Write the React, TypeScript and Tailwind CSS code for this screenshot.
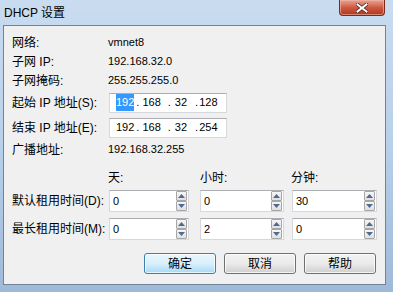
import React from 'react';

const cjk = "font-['Liberation_Sans','Noto_Sans_CJK_SC',sans-serif]";

const InfoRow = ({ label, value }: { label: string; value: string }) => (
  <div className="flex h-[19px] items-center">
    <span className="w-[96px] text-[12px] text-black">{label}</span>
    <span className="text-[11px] text-black">{value}</span>
  </div>
);

const IpBox = ({ last, selectFirst }: { last: string; selectFirst?: boolean }) => (
  <div className="flex h-[20px] w-[118px] items-center border border-[#d5d8dd] border-t-[#abadb3] bg-white pl-[6px] text-[11px]">
    <span className={selectFirst ? 'bg-[#3399ff] text-white' : ''}>192</span>
    <span className="ml-[2px]">.</span>
    <span className="ml-[3px]">168</span>
    <span className="ml-[7px]">.</span>
    <span className="ml-[4px]">32</span>
    <span className="ml-[8px]">.</span>
    <span className="ml-[1px]">{last}</span>
  </div>
);

const Arrow = ({ up }: { up?: boolean }) => (
  <div className="flex h-[10px] w-[11px] items-center justify-center rounded-[1px] border border-[#a6a6a6] bg-gradient-to-b from-[#f6f6f6] to-[#e0e0e0]">
    <svg width="7" height="4" viewBox="0 0 7 4">
      {up ? <polygon points="3.5,0 7,4 0,4" fill="#4e6a93" /> : <polygon points="0,0 7,0 3.5,4" fill="#4e6a93" />}
    </svg>
  </div>
);

const Spin = ({ value, width }: { value: string; width: string }) => (
  <div className={`flex h-[22px] ${width} items-center justify-between border border-[#d5d8dd] border-t-[#abadb3] bg-white pl-[3px] pr-[1px]`}>
    <span className="text-[11px]">{value}</span>
    <div className="flex flex-col">
      <Arrow up />
      <Arrow />
    </div>
  </div>
);

const Button = ({ label, primary }: { label: string; primary?: boolean }) => (
  <button
    className={`flex h-[21px] w-[72px] items-center justify-center rounded-[3px] border text-[12px] text-black ${
      primary
        ? 'border-[#3c7fb1] bg-gradient-to-b from-[#eaf6fd] via-[#d9f0fc] to-[#a7d9f5] shadow-[inset_0_0_0_1px_#ffffffb0]'
        : 'border-[#707070] bg-gradient-to-b from-[#f2f2f2] via-[#ebebeb] to-[#cfcfcf] shadow-[inset_0_0_0_1px_#ffffffc0]'
    }`}
  >
    {label}
  </button>
);

export default function App() {
  return (
    <div className={`${cjk} relative flex h-[292px] w-[393px] flex-col overflow-hidden bg-gradient-to-b from-[#c9dcf0] via-[#b8d0ea] to-[#9fb9d8]`}>
      {/* title bar */}
      <div className="flex h-[25px] items-start justify-between">
        <span className="ml-[4px] mt-[4px] text-[12px] text-black">DHCP 设置</span>
        <div className="mr-[8px] flex h-[16px] w-[46px] items-center justify-center rounded-b-[4px] border border-t-0 border-[#7a2a1c] bg-gradient-to-b from-[#e8a493] via-[#cd5a42] to-[#b0361d] shadow-[inset_0_0_0_1px_#f0b8a8a0]">
          <svg width="12" height="10" viewBox="0 0 12 10">
            <path d="M1.5 1.5 L10.5 8.5 M10.5 1.5 L1.5 8.5" stroke="#3a1a14" strokeWidth="3.4" strokeLinecap="square" />
            <path d="M1.5 1.5 L10.5 8.5 M10.5 1.5 L1.5 8.5" stroke="#ffffff" strokeWidth="2" strokeLinecap="square" />
          </svg>
        </div>
      </div>

      {/* client area */}
      <div className="ml-[3px] flex h-[260px] w-[383px] flex-col border border-[#6f8399] bg-[#f0f0f0] pl-[8px] pt-[7px] text-black">
        <InfoRow label="网络:" value="vmnet8" />
        <InfoRow label="子网 IP:" value="192.168.32.0" />
        <InfoRow label="子网掩码:" value="255.255.255.0" />

        <div className="flex h-[25px] items-center">
          <span className="w-[97px] text-[12px]">起始 IP 地址(S):</span>
          <IpBox last="128" selectFirst />
        </div>
        <div className="flex h-[25px] items-center">
          <span className="w-[97px] text-[12px]">结束 IP 地址(E):</span>
          <IpBox last="254" />
        </div>
        <InfoRow label="广播地址:" value="192.168.32.255" />

        <div className="mt-[10px] flex h-[18px] items-center text-[12px]">
          <span className="ml-[96px] w-[92px]">天:</span>
          <span className="w-[91px]">小时:</span>
          <span>分钟:</span>
        </div>

        <div className="mt-[3px] flex items-center">
          <span className="w-[97px] text-[12px]">默认租用时间(D):</span>
          <Spin value="0" width="w-[80px]" />
          <div className="w-[11px]" />
          <Spin value="0" width="w-[84px]" />
          <div className="w-[8px]" />
          <Spin value="30" width="w-[85px]" />
        </div>
        <div className="mt-[6px] flex items-center">
          <span className="w-[97px] text-[12px]">最长租用时间(M):</span>
          <Spin value="0" width="w-[80px]" />
          <div className="w-[11px]" />
          <Spin value="2" width="w-[84px]" />
          <div className="w-[8px]" />
          <Spin value="0" width="w-[85px]" />
        </div>

        <div className="mt-[13px] flex justify-end gap-[8px] pr-[9px]">
          <Button label="确定" primary />
          <Button label="取消" />
          <Button label="帮助" />
        </div>
      </div>
    </div>
  );
}
